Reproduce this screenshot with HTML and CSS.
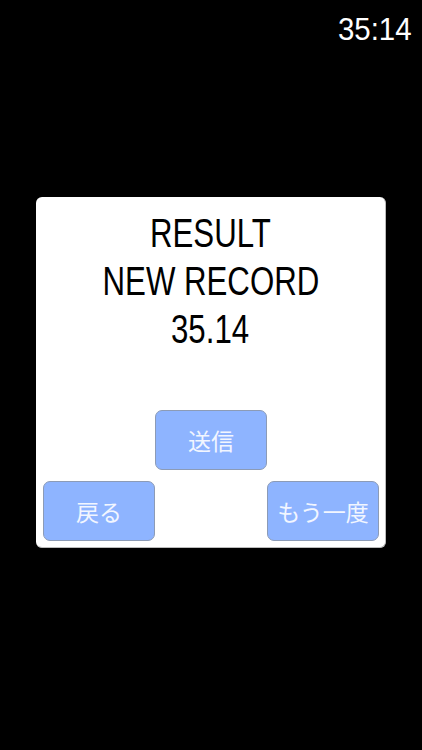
FILE: index.html
```html
<!DOCTYPE html>
<html lang="ja">
<head>
<meta charset="utf-8">
<title>Result</title>
<link rel="stylesheet" href="styles.css">
</head>
<body>
<div class="screen">
  <header class="topbar">
    <span class="timer">35:14</span>
  </header>
  <section class="panel">
    <div class="result">
      <div class="line"><span class="narrow">RESULT</span></div>
      <div class="line"><span class="narrow">NEW RECORD</span></div>
      <div class="line"><span class="narrow">35.14</span></div>
    </div>
    <div class="actions">
      <button class="btn btn-send">送信</button>
      <button class="btn btn-back">戻る</button>
      <button class="btn btn-retry">もう一度</button>
    </div>
  </section>
</div>
</body>
</html>
```

FILE: styles.css
```css
html, body {
  margin: 0;
  padding: 0;
  background: #000;
}
.screen {
  width: 422px;
  height: 750px;
  background: #000;
  overflow: hidden;
}
.topbar {
  display: flex;
  justify-content: flex-end;
  padding: 12px 10px 0 0;
  height: 36px;
}
.timer {
  display: inline-block;
  font-family: "Liberation Sans", Arial, sans-serif;
  font-size: 31px;
  line-height: 36px;
  color: #fff;
  transform: scaleX(0.95);
  transform-origin: right center;
}
.panel {
  box-sizing: border-box;
  width: 350px;
  height: 351px;
  margin: 149px auto 0;
  background: #fff;
  border-radius: 6px;
  border-right: 1px solid #bbb;
  border-bottom: 1px solid #bbb;
  padding: 12px 7px 6px;
  display: flex;
  flex-direction: column;
}
.result {
  text-align: center;
  font-family: "Liberation Sans", Arial, sans-serif;
  font-size: 40px;
  line-height: 48px;
  color: #000;
}
.narrow {
  display: inline-block;
  transform: scaleX(0.78);
  transform-origin: center;
  white-space: nowrap;
}
.actions {
  margin-top: 57px;
  display: grid;
  grid-template-columns: repeat(3, 112px);
  grid-template-rows: 60px 60px;
  row-gap: 11px;
}
.btn {
  box-sizing: border-box;
  margin: 0;
  padding: 0;
  background: #8eb4ff;
  border: 1px solid #8c9bb6;
  border-radius: 7px;
  color: #f2f6ff;
  font-family: "Noto Sans CJK JP", "Noto Sans", sans-serif;
  font-size: 23px;
  line-height: 1;
  display: flex;
  align-items: center;
  justify-content: center;
}
.btn-send {
  grid-column: 2;
  grid-row: 1;
}
.btn-back {
  grid-column: 1;
  grid-row: 2;
}
.btn-retry {
  grid-column: 3;
  grid-row: 2;
}
```
